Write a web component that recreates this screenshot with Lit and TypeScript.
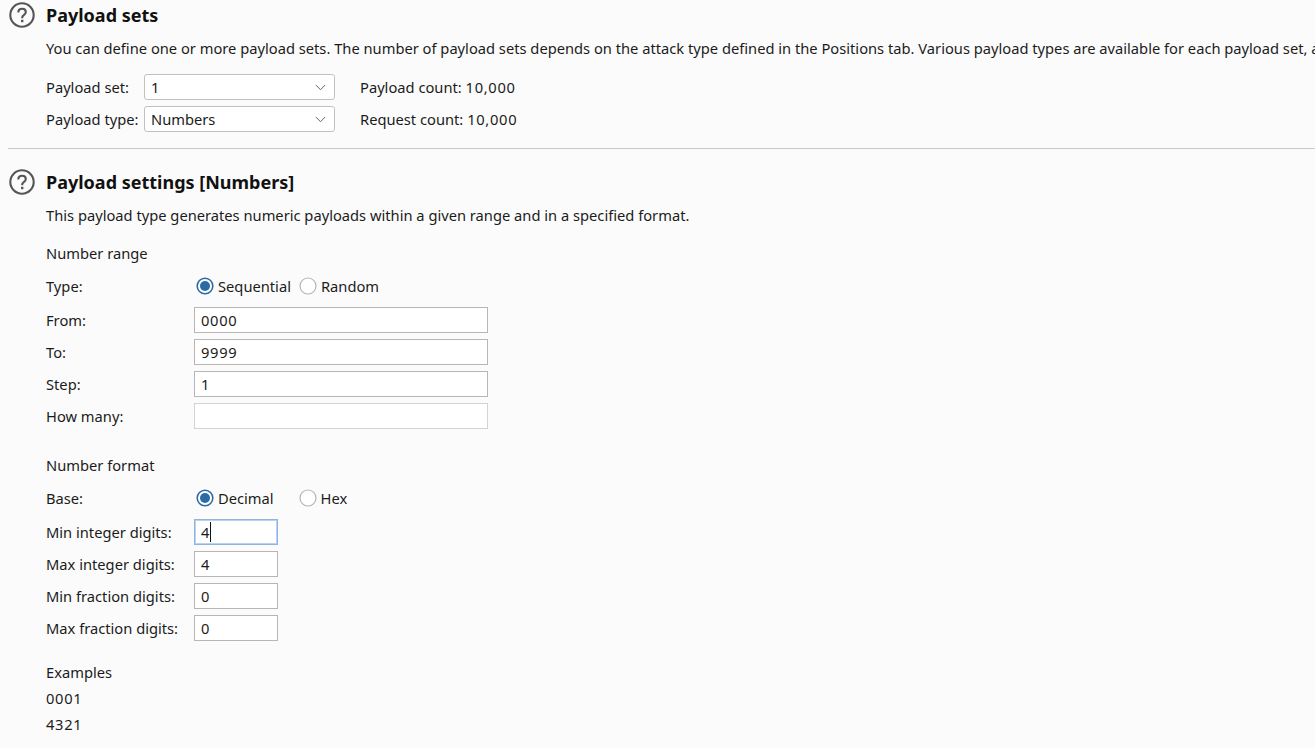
import { LitElement, html, css } from "lit";
import { customElement } from "lit/decorators.js";

const help = html`<svg class="help" width="26" height="26" viewBox="0 0 26 26" fill="none">
  <circle cx="13" cy="13" r="11.7" stroke="#555" stroke-width="2.1"/>
  <path d="M9.3 10.4c0-2.2 1.6-3.6 3.8-3.6 2.2 0 3.7 1.3 3.7 3.2 0 1.5-.8 2.3-2 3.1-1.1.7-1.6 1.3-1.6 2.5v.6" stroke="#555" stroke-width="2.1" fill="none"/>
  <rect x="12" y="17.8" width="2.4" height="2.4" fill="#555"/>
</svg>`;
const chevron = html`<svg class="chev" width="11" height="7" viewBox="0 0 11 7" fill="none"><path d="M.8 1l4.7 4.7L10.2 1" stroke="#666" stroke-width="1"/></svg>`;

@customElement("app-root")
export class AppRoot extends LitElement {
  static styles = css`
    :host { display: block; width: 1315px; height: 748px; overflow: hidden; background: #fbfbfb; color: #1b1b1b;
      font-family: "Noto Sans", sans-serif; font-size: 14.7px; line-height: 20px; white-space: nowrap; }
    .page { padding-left: 8px; display: flex; flex-direction: column; }
    .head { display: flex; align-items: center; height: 26px; gap: 11px; }
    .help { flex: none; margin-left: 1px; }
    h2 { margin: 0; font-size: 18px; font-weight: 700; line-height: 26px; color: #111; }
    .body { padding-left: 38px; display: flex; flex-direction: column; }
    .desc { height: 20px; }
    .row { display: flex; align-items: center; height: 26px; }
    .sel-label { width: 98px; }
    .select { width: 191px; height: 26px; box-sizing: border-box; border: 1px solid #c4c0c0; border-radius: 3px; background: #fff;
      display: flex; align-items: center; justify-content: space-between; padding: 0 8px 0 6px; }
    .count { margin-left: 25px; }
    .num { letter-spacing: 0.7px; }
    hr { border: 0; border-top: 1px solid #c9c9c9; margin: 0; height: 0; }
    .label { width: 148px; flex: none; }
    .input { box-sizing: border-box; height: 26px; border: 1px solid #b9b5b5; background: #fff; padding: 0 6px; display: flex; align-items: center; }
    .wide { width: 294px; }
    .narrow { width: 84px; }
    .disabled { border-color: #d4d2d2; }
    .focus { border-color: #8fb4e0; box-shadow: inset 0 0 0 1px #b9d2ee; }
    .caret { width: 1px; height: 20px; background: #111; }
    .radio { width: 18px; height: 18px; flex: none; margin-left: 2px; margin-right: 4px; }
    .after { margin-right: 6px; }
    .after-wide { margin-right: 23px; }
    .stack { display: flex; flex-direction: column; gap: 6px; }
    .line { height: 20px; }
    .mt3 { margin-top: 2px; }
    .mt8 { margin-top: 8px; }
    .mt10 { margin-top: 10px; }
    .mt16 { margin-top: 16px; }
    .mt18 { margin-top: 18px; }
    .mt20 { margin-top: 20px; }
    .mt26 { margin-top: 26px; }
    .mt6 { margin-top: 6px; }
    .mt21 { margin-top: 21px; }
  `;

  private radio(on: boolean) {
    return on
      ? html`<svg class="radio" viewBox="0 0 18 18"><circle cx="9" cy="9" r="7.8" fill="#fff" stroke="#2c6aa4" stroke-width="1.6"/><circle cx="9" cy="9" r="5" fill="#2c6aa4"/></svg>`
      : html`<svg class="radio" viewBox="0 0 18 18"><circle cx="9" cy="9" r="8" fill="#fff" stroke="#b5b5b5" stroke-width="1.2"/></svg>`;
  }

  private field(label: string, value: string, cls: string) {
    return html`<div class="row"><div class="label">${label}</div><div class="input ${cls}"><span class="num">${value}</span>${cls.includes("focus") ? html`<span class="caret"></span>` : ""}</div></div>`;
  }

  render() {
    return html`<div class="page">
      <div class="head mt3">${help}<h2>Payload sets</h2></div>
      <div class="body">
        <div class="desc mt10">You can define one or more payload sets. The number of payload sets depends on the attack type defined in the Positions tab. Various payload types are available for each payload set, a</div>
        <div class="stack mt16">
          <div class="row"><div class="sel-label">Payload set:</div><div class="select">1${chevron}</div><div class="count">Payload count: <span class="num">10,000</span></div></div>
          <div class="row"><div class="sel-label">Payload type:</div><div class="select">Numbers${chevron}</div><div class="count">Request count: <span class="num">10,000</span></div></div>
        </div>
      </div>
      <hr class="mt16" />
      <div class="head mt20">${help}<h2>Payload settings [Numbers]</h2></div>
      <div class="body">
        <div class="desc mt10">This payload type generates numeric payloads within a given range and in a specified format.</div>
        <div class="line mt18">Number range</div>
        <div class="row mt10"><div class="label">Type:</div>${this.radio(true)}<span class="after">Sequential</span>${this.radio(false)}<span>Random</span></div>
        <div class="stack mt8">
          ${this.field("From:", "0000", "wide")}
          ${this.field("To:", "9999", "wide")}
          ${this.field("Step:", "1", "wide")}
          ${this.field("How many:", "", "wide disabled")}
        </div>
        <div class="line mt26">Number format</div>
        <div class="row mt10"><div class="label">Base:</div>${this.radio(true)}<span class="after-wide">Decimal</span>${this.radio(false)}<span>Hex</span></div>
        <div class="stack mt8">
          ${this.field("Min integer digits:", "4", "narrow focus")}
          ${this.field("Max integer digits:", "4", "narrow")}
          ${this.field("Min fraction digits:", "0", "narrow")}
          ${this.field("Max fraction digits:", "0", "narrow")}
        </div>
        <div class="line mt21">Examples</div>
        <div class="line mt6 num">0001</div>
        <div class="line mt6 num">4321</div>
      </div>
    </div>`;
  }
}
